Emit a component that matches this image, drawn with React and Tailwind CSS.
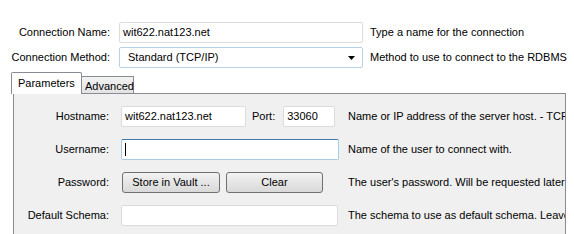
import React from "react";

const font = { fontFamily: '"Liberation Sans", Arial, sans-serif' };

const Input = ({ value, className = "", focused }) => (
  <div
    className={`shrink-0 h-[21px] flex items-center px-[3px] bg-white rounded-[2px] border ${
      focused ? "border-[#a9cce6] border-t-[#3d7bad]" : "border-[#dcdcdc]"
    } ${className}`}
  >
    {focused && <span className="w-px h-[13px] bg-black" />}
    {value}
  </div>
);

const Button = ({ children, className = "" }) => (
  <div
    className={`shrink-0 h-[21px] flex items-center justify-center rounded-[3px] border border-[#707070] bg-gradient-to-b from-[#f2f2f2] to-[#d9d9d9] ${className}`}
  >
    {children}
  </div>
);

const Row = ({ label, children, desc }) => (
  <div className="flex items-center h-[21px]">
    <div className="shrink-0 w-[95px] text-right whitespace-nowrap">{label}</div>
    <div className="shrink-0 ml-[12px] flex items-center w-[227px]">{children}</div>
    <div className="shrink-0 whitespace-nowrap">{desc}</div>
  </div>
);

export default function App() {
  return (
    <div className="w-[574px] h-[234px] bg-white text-black text-[11px] overflow-hidden" style={font}>
      {/* top fields */}
      <div className="pt-[22px] flex flex-col gap-[4px]">
        <div className="flex items-center h-[21px]">
          <div className="shrink-0 w-[110px] text-right">Connection Name:</div>
          <Input value="wit622.nat123.net" className="ml-[9px] w-[244px]" />
          <div className="ml-[7px] whitespace-nowrap">Type a name for the connection</div>
        </div>
        <div className="flex items-center h-[21px]">
          <div className="shrink-0 w-[110px] text-right">Connection Method:</div>
          <div className="shrink-0 ml-[9px] w-[244px] h-[21px] flex items-center justify-between pl-[8px] pr-[7px] bg-white rounded-[2px] border border-[#b9d1e6]">
            <span>Standard (TCP/IP)</span>
            <svg width="7" height="4" viewBox="0 0 7 4">
              <path d="M0 0h7L3.5 4z" fill="#000" />
            </svg>
          </div>
          <div className="ml-[7px] whitespace-nowrap">Method to use to connect to the RDBMS</div>
        </div>
      </div>

      {/* tabs */}
      <div className="mt-[4px] pl-[11px] flex items-end h-[22px] relative z-10">
        <div className="h-[22px] w-[71px] border border-b-0 border-[#898c95] bg-white pl-[6px] pt-[2px] rounded-t-[2px]">
          Parameters
        </div>
        <div className="h-[18px] w-[52px] border border-l-0 border-[#898c95] bg-gradient-to-b from-[#f2f2f2] to-[#e3e3e3] pl-[3px] pt-[1px]">
          Advanced
        </div>
      </div>

      {/* panel */}
      <div className="ml-[13px] w-[553px] -mt-[1px] border border-[#898c95] bg-[#f0f0f0] overflow-hidden pt-[12px] pb-[20px] flex flex-col gap-[12px]">
        <Row label="Hostname:" desc="Name or IP address of the server host. - TCP/IP port.">
          <Input value="wit622.nat123.net" className="w-[125px]" />
          <span className="ml-[6px]">Port:</span>
          <Input value="33060" className="ml-[8px] w-[52px]" />
        </Row>
        <Row label="Username:" desc="Name of the user to connect with.">
          <Input focused className="w-[218px]" />
        </Row>
        <Row label="Password:" desc="The user's password. Will be requested later if it's not set.">
          <Button className="ml-px w-[98px]">Store in Vault ...</Button>
          <Button className="ml-[6px] w-[97px]">Clear</Button>
        </Row>
        <Row label="Default Schema:" desc="The schema to use as default schema. Leave blank to select it later.">
          <Input className="w-[217px]" />
        </Row>
      </div>
    </div>
  );
}
